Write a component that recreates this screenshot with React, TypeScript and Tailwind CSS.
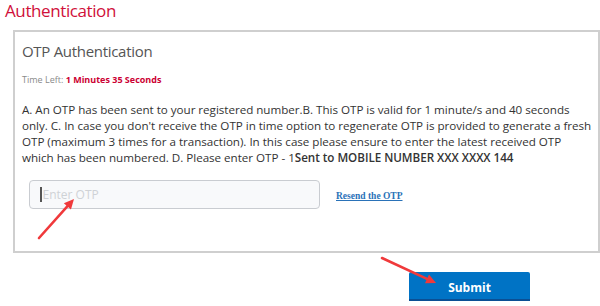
import React from 'react';

function Arrow({ x1, y1, x2, y2 }: { x1: number; y1: number; x2: number; y2: number }) {
  const a = Math.atan2(y2 - y1, x2 - x1);
  const len = 11;
  const w = 0.45;
  const p1 = [x2 - len * Math.cos(a - w), y2 - len * Math.sin(a - w)];
  const p2 = [x2 - len * Math.cos(a + w), y2 - len * Math.sin(a + w)];
  const bx = x2 - 7 * Math.cos(a);
  const by = y2 - 7 * Math.sin(a);
  return (
    <g>
      <line x1={x1} y1={y1} x2={bx} y2={by} stroke="#f0393b" strokeWidth={2.6} strokeLinecap="round" />
      <polygon points={`${x2},${y2} ${p1[0]},${p1[1]} ${p2[0]},${p2[1]}`} fill="#f0393b" />
    </g>
  );
}

export default function App() {
  return (
    <div className="relative w-[600px] h-[306px] bg-white overflow-hidden" style={{ fontFamily: '"Open Sans", sans-serif' }}>
      <h1 className="pl-[5px] text-[17px] leading-[22px] tracking-[-0.4px] text-[#d0103a]">Authentication</h1>

      <div className="ml-[13px] mt-[8px] w-[587px] h-[223px] border-2 border-[#cfcfcf] pl-[7px] pr-0 pt-[8px]">
        <h2 className="text-[15px] leading-[22px] tracking-[-0.3px] text-[#555]">OTP Authentication</h2>
        <div className="mt-[12px] text-[9px] leading-[12px] text-[#8a8a8a]">
          Time Left: <span className="font-bold text-[#cc0033]">1 Minutes 35 Seconds</span>
        </div>
        <p className="mt-[16px] text-[11.65px] leading-[16px] tracking-[-0.03px] text-[#333] whitespace-nowrap">
          A. An OTP has been sent to your registered number.B. This OTP is valid for 1 minute/s and 40 seconds
          <br />
          only. C. In case you don't receive the OTP in time option to regenerate OTP is provided to generate a fresh
          <br />
          OTP (maximum 3 times for a transaction). In this case please ensure to enter the latest received OTP
          <br />
          which has been numbered. D. Please enter OTP - 1<span className="font-semibold">Sent to MOBILE NUMBER XXX XXXX 144</span>
        </p>
        <div className="mt-[14px] ml-[7px] flex items-center gap-[16px]">
          <div className="w-[291px] h-[29px] rounded-[4px] border border-[#c9ccd1] bg-[#f8f9fb] flex items-center pl-[10px]">
            <span className="w-[1.5px] h-[15px] bg-[#555] mr-[1px]" />
            <span className="text-[12px] text-[#cfd2d6]">Enter OTP</span>
          </div>
          <a className="mt-[3px] text-[9.5px] font-bold text-[#2a72b8] underline" style={{ fontFamily: '"Liberation Serif", serif' }}>
            Resend the OTP
          </a>
        </div>
      </div>

      <div className="mt-[19px] ml-[409px] w-[121px] h-[29px] bg-[#0073c5] border-b-2 border-[#0b4f94] rounded-t-[2px] flex items-center justify-center pt-[5px]">
        <span className="text-white text-[12px] font-bold">Submit</span>
      </div>

      <svg className="absolute inset-0 pointer-events-none" width="600" height="306">
        <Arrow x1={39} y1={238} x2={74} y2={199} />
        <Arrow x1={382} y1={258} x2={436} y2={283} />
      </svg>
    </div>
  );
}
